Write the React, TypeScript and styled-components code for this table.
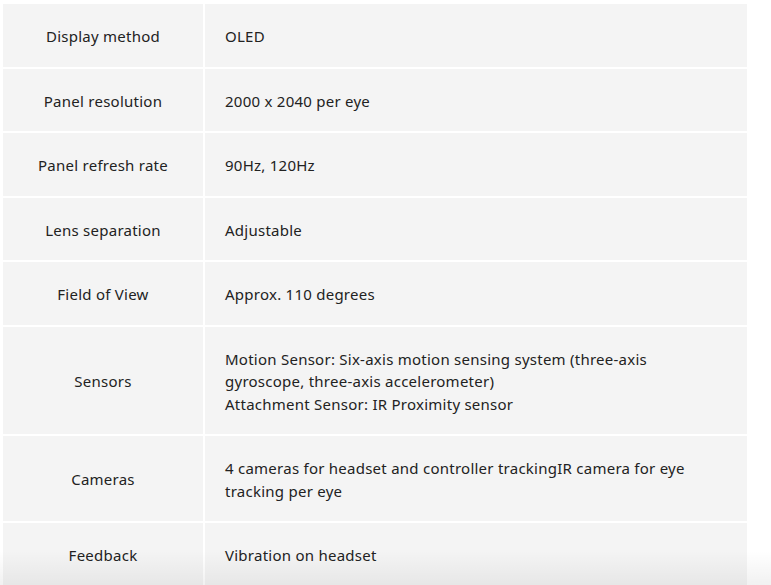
import React from "react";
import styled, { createGlobalStyle } from "styled-components";

const Global = createGlobalStyle`
  html, body { margin: 0; padding: 0; background: #ffffff; }
  body { font-family: "Noto Sans", "Open Sans", sans-serif; overflow: hidden; }
`;

const Page = styled.div`
  position: relative;
  width: 771px;
  height: 585px;
  overflow: hidden;
  background: #ffffff;
  padding: 4px 24px 0 3px;
  box-sizing: border-box;
`;

const Table = styled.div`
  display: grid;
  grid-template-columns: 200px 542px;
  gap: 2px;
`;

const Cell = styled.div<{ $label?: boolean }>`
  background: #f4f4f4;
  padding: 21px 20px 19px;
  font-size: 15px;
  letter-spacing: 0.25px;
  line-height: 22.5px;
  color: #222222;
  display: flex;
  align-items: center;
  justify-content: ${(p) => (p.$label ? "center" : "flex-start")};
  text-align: ${(p) => (p.$label ? "center" : "left")};
`;

const Fade = styled.div`
  position: absolute;
  left: 0;
  right: 0;
  bottom: 0;
  height: 34px;
  pointer-events: none;
  background: linear-gradient(to bottom, rgba(0, 0, 0, 0), rgba(0, 0, 0, 0.055));
`;

const rows: [string, React.ReactNode][] = [
  ["Display method", "OLED"],
  ["Panel resolution", "2000 x 2040 per eye"],
  ["Panel refresh rate", "90Hz, 120Hz"],
  ["Lens separation", "Adjustable"],
  ["Field of View", "Approx. 110 degrees"],
  [
    "Sensors",
    <>
      Motion Sensor: Six-axis motion sensing system (three-axis gyroscope, three-axis accelerometer)
      <br />
      Attachment Sensor: IR Proximity sensor
    </>,
  ],
  ["Cameras", "4 cameras for headset and controller trackingIR camera for eye tracking per eye"],
  ["Feedback", "Vibration on headset"],
];

export default function App() {
  return (
    <Page>
      <Global />
      <Table>
        {rows.map(([k, v]) => (
          <React.Fragment key={k}>
            <Cell $label>{k}</Cell>
            <Cell>
              <span>{v}</span>
            </Cell>
          </React.Fragment>
        ))}
      </Table>
      <Fade />
    </Page>
  );
}
